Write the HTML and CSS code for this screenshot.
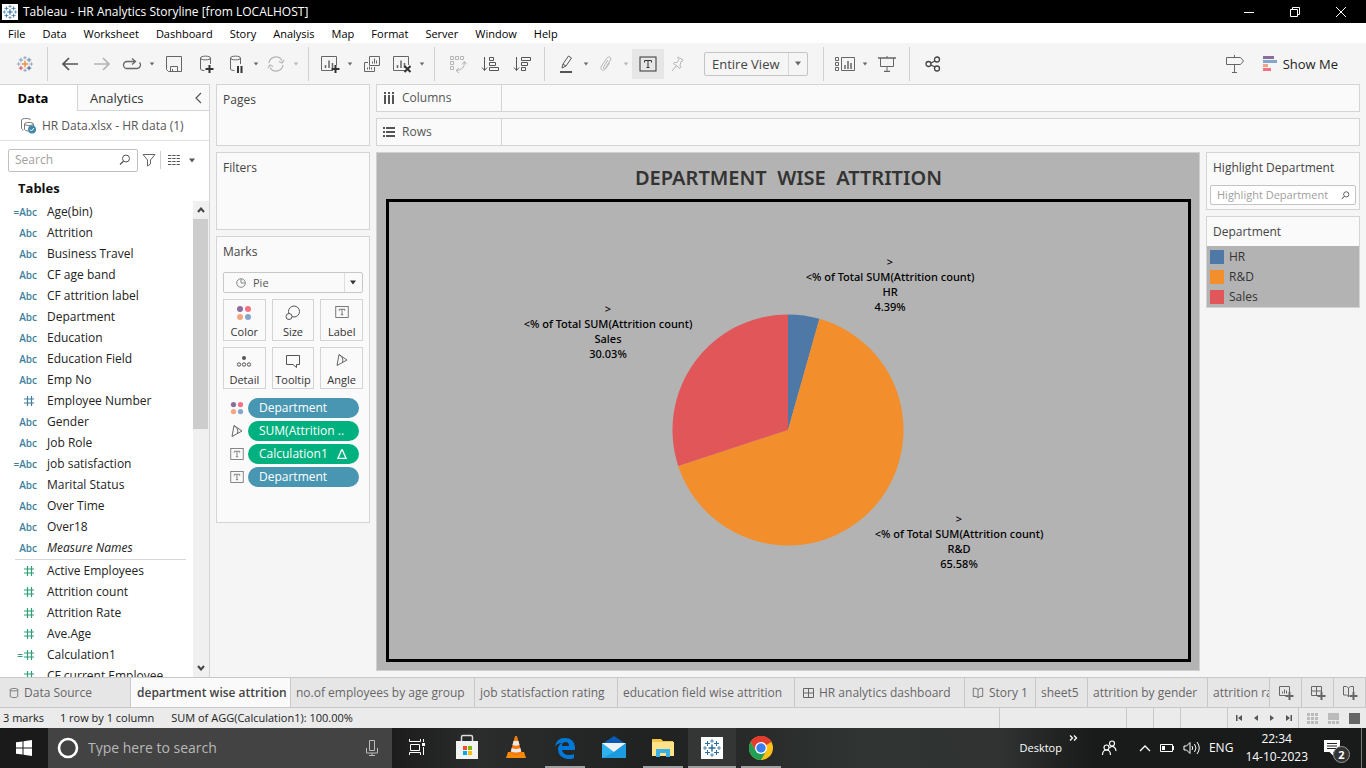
FILE: index.html
```html
<!DOCTYPE html>
<html lang="en">
<head>
<meta charset="utf-8">
<title>Tableau - HR Analytics Storyline</title>
<link rel="stylesheet" href="styles.css">
</head>
<body>
<svg class="defs" aria-hidden="true">
  <symbol id="caret" viewBox="0 0 8 5"><path d="M1 .5h6L4 4.5z" fill="currentColor"/></symbol>
  <symbol id="sheet" viewBox="0 0 20 18"><path d="M13 15.500H1.500V1.500h15V10" fill="none" stroke="currentColor"/><path d="M5.500 13v-3M9 13V5.500M12.500 13V8" stroke="currentColor" stroke-width="1.500"/></symbol>
  <symbol id="tbox" viewBox="0 0 18 16"><rect x="1" y="1" width="16" height="14" fill="none" stroke="currentColor"/><path d="M5.500 6.500v-2h7v2M9 4.500v7M7.500 11.500h3" fill="none" stroke="currentColor"/></symbol>
  <symbol id="dots" viewBox="0 0 16 16"><circle cx="4" cy="4" r="3" fill="#8a6e9e"/><circle cx="12" cy="4" r="3" fill="#fa7083"/><circle cx="4" cy="12" r="3" fill="#f3a67f"/><circle cx="12" cy="12" r="3" fill="#84a6cd"/></symbol>
  <symbol id="angle" viewBox="0 0 14 14"><path d="M4 1.500L12 7L2 12.500zM4 1.500Q9 4.500 7.500 9.500" fill="none" stroke="#666"/></symbol>
  <symbol id="lens" viewBox="0 0 12 12"><circle cx="7" cy="4.500" r="3.500" fill="none" stroke="currentColor"/><path d="M4.500 7.200L1 10.500" stroke="currentColor" stroke-width="1.300"/></symbol>
  <symbol id="hash" viewBox="0 0 12 12"><path d="M4.500 1v10M8.500 1v10M1 4h10M1 8h10" stroke="currentColor" stroke-width="1.200"/></symbol>
  <symbol id="book" viewBox="0 0 14 14"><path d="M7 3L4.500 1.500h-3v9.500h3L7 12.500L9.500 11h3V1.500h-3zM7 3v9" fill="none" stroke="currentColor"/></symbol>
  <symbol id="cross" viewBox="0 0 20 20"><g stroke="currentColor" fill="none"><path d="M10 6.500v7M6.500 10h7" stroke-width="1.500" stroke="var(--c0,currentColor)"/><path d="M5.500 3v5M3 5.500h5" stroke="var(--c1,currentColor)"/><path d="M14.500 3v5M12 5.500h5" stroke="var(--c2,currentColor)"/><path d="M5.500 12v5M3 14.500h5" stroke="var(--c3,currentColor)"/><path d="M14.500 12v5M12 14.500h5" stroke="var(--c4,currentColor)"/><path d="M10 1v4M8 3h4M10 15v4M8 17h4M3 8v4M1 10h4M17 8v4M15 10h4" stroke="var(--c5,currentColor)" stroke-width=".8"/></g></symbol>
  <symbol id="db" viewBox="0 0 12 14"><path d="M1.500 3v8c0 2 9 2 9 0V3M1.500 3c0-2 9-2 9 0s-9 2-9 0z" fill="none" stroke="currentColor"/></symbol>
</svg>

<div class="app">
<header class="titlebar">
  <svg class="applogo" width="16" height="16" viewBox="0 0 20 20"><use href="#cross"/></svg>
  <span class="title">Tableau - HR Analytics Storyline [from LOCALHOST]</span>
  <button aria-label="Minimize"><svg width="12" height="12"><path d="M1 6.500h10" stroke="#fff"/></svg></button>
  <button aria-label="Restore"><svg width="12" height="12" fill="none" stroke="#fff"><path d="M1.500 3.500h7v7h-7zM3.500 3V1.500h7v7H9"/></svg></button>
  <button aria-label="Close"><svg width="12" height="12" stroke="#fff"><path d="M1 1l10 10M11 1L1 11"/></svg></button>
</header>
<nav class="menubar">
  <button>File</button><button>Data</button><button>Worksheet</button><button>Dashboard</button><button>Story</button><button>Analysis</button><button>Map</button><button>Format</button><button>Server</button><button>Window</button><button>Help</button>
</nav>
<div class="toolbar">
  <button class="tb start" aria-label="Start page"><svg class="colorlogo" width="18" height="18"><use href="#cross"/></svg></button>
  <i class="sep"></i>
  <button class="tb" aria-label="Back"><svg width="18" height="14"><path d="M8 1L2 7l6 6M2 7h15" fill="none" stroke="#555" stroke-width="1.700"/></svg></button>
  <button class="tb" aria-label="Forward"><svg width="18" height="14"><path d="M10 1l6 6l-6 6M16 7H1" fill="none" stroke="#b4b4b4" stroke-width="1.700"/></svg></button>
  <button class="tb slim" aria-label="Redo"><svg width="20" height="12"><path d="M13 3.500H5a3.500 3.500 0 0 0 0 7h10a3.500 3.500 0 0 0 2.500-6M10 .5l3.500 3L10 6.500" fill="none" stroke="#666" stroke-width="1.300"/></svg></button>
  <button class="dd" aria-label="Redo options"><svg width="6" height="4"><use href="#caret"/></svg></button>
  <button class="tb" aria-label="Save"><svg width="18" height="18" fill="none" stroke="#666"><path d="M1.500 1.500h15v15h-13l-2-2zM5.500 16v-4.500h7V16M7.500 14v2"/></svg></button>
  <button class="tb" aria-label="New data source"><svg width="18" height="18" viewBox="0 0 18 18" fill="none" stroke="#666"><path d="M3.500 3v11c0 1 2 1.500 4 1.500M3.500 3c0-2.500 10-2.500 10 0s-10 2.500-10 0zM13.500 3v6"/><path d="M12.500 10v8M8.500 14h8" stroke="#333" stroke-width="2"/></svg></button>
  <button class="tb slim" aria-label="Pause updates"><svg width="18" height="18" viewBox="0 0 18 18" fill="none" stroke="#666"><path d="M3.500 3v11c0 1 2 1.500 4 1.500M3.500 3c0-2.500 10-2.500 10 0s-10 2.500-10 0zM13.500 3v6"/><path d="M11 11v7M14.500 11v7" stroke="#333" stroke-width="2"/></svg></button>
  <button class="dd" aria-label="Pause options"><svg width="6" height="4"><use href="#caret"/></svg></button>
  <button class="tb slim" aria-label="Refresh"><svg width="18" height="18" fill="none" stroke="#b4b4b4" stroke-width="1.300"><path d="M2 8a7 7 0 0 1 13-2.500M16 10a7 7 0 0 1-13 2.500M17 5l-2 3-3-1.500M1 13l2-3 3 1.500"/></svg></button>
  <button class="dd off" aria-label="Refresh options"><svg width="6" height="4"><use href="#caret"/></svg></button>
  <i class="sep"></i>
  <button class="tb slim" aria-label="New worksheet"><svg width="20" height="18"><use href="#sheet"/><path d="M15.500 10v8M11.500 14h8" stroke="#333" stroke-width="2"/></svg></button>
  <button class="dd" aria-label="New worksheet options"><svg width="6" height="4"><use href="#caret"/></svg></button>
  <button class="tb" aria-label="Duplicate"><svg width="18" height="18" fill="none" stroke="#666"><path d="M6.500 1.500h10v9h-10zM9.500 8.500v-2M11.500 8.500v-5M13.500 8.500v-3M5 7.500H1.500v9h10V12M4.500 14.500v-2M6.500 14.500v-3M8.500 14.500v-2"/></svg></button>
  <button class="tb slim" aria-label="Clear sheet"><svg width="20" height="18"><use href="#sheet"/><path d="M12.500 11l6 6M18.500 11l-6 6" stroke="#333" stroke-width="2"/></svg></button>
  <button class="dd" aria-label="Clear options"><svg width="6" height="4"><use href="#caret"/></svg></button>
  <i class="sep"></i>
  <button class="tb" aria-label="Swap"><svg width="18" height="18" fill="none" stroke="#b4b4b4"><path d="M1.500 1.500h3v3h-3zM6.500 1.500h3v3h-3zM11.500 1.500h3v3h-3zM1.500 6.500h3v3h-3zM1.500 11.500h3v3h-3zM15.500 7q0 8-8 8.500M13 9.500l2.500-3 2.500 3M10 13l-3 2.500 3 2.500"/></svg></button>
  <button class="tb" aria-label="Sort ascending"><svg width="18" height="16" fill="none" stroke="#555"><path d="M3.500 1v13M1 11.500l2.500 3 2.500-3M8.500 1.500h4v3h-4zM8.500 6.500h6v3h-6zM8.500 11.500h9v3h-9z"/></svg></button>
  <button class="tb" aria-label="Sort descending"><svg width="18" height="16" fill="none" stroke="#555"><path d="M3.500 1v13M1 11.500l2.500 3 2.500-3M8.500 1.500h9v3h-9zM8.500 6.500h6v3h-6zM8.500 11.500h4v3h-4z"/></svg></button>
  <i class="sep"></i>
  <button class="tb slim" aria-label="Highlight"><svg width="14" height="18" fill="none" stroke="#555"><path d="M3 13l1-4 5.500-8 3 2L7 11zM4 9l3 2"/><path d="M1 17h12" stroke-width="2"/></svg></button>
  <button class="dd" aria-label="Highlight options"><svg width="6" height="4"><use href="#caret"/></svg></button>
  <button class="tb slim" aria-label="Group"><svg width="14" height="16" fill="none" stroke="#b4b4b4"><path d="M9 4L4.500 11c-.8 1.500 1 2.500 2 1l5-8c1.500-3-2-4-3.500-2L2.500 10c-2 3.500 1.500 6 4 3l4-6"/></svg></button>
  <button class="dd off" aria-label="Group options"><svg width="6" height="4"><use href="#caret"/></svg></button>
  <button class="tb on" aria-label="Show mark labels"><svg width="18" height="16"><use href="#tbox"/></svg></button>
  <button class="tb slim" aria-label="Fix axes"><svg width="14" height="16" fill="none" stroke="#b4b4b4"><path d="M7 1l5 3-1 1.500-1 0-1 4 1 2-1 1-6.500-5 1-1H6l2-3-1-1zM5 10l-4 5"/></svg></button>
  <div class="fit"><select aria-label="Fit"><option>Entire View</option></select><svg width="8" height="5"><use href="#caret"/></svg></div>
  <i class="sep"></i>
  <button class="tb slim" aria-label="Show/hide cards"><svg width="22" height="16" fill="none" stroke="#666"><path d="M1.500 1.500h3v3h-3zM1.500 6.500h3v3h-3zM1.500 11.500h3v3h-3zM7.500 1.500h13v13h-13z"/><path d="M11 13V9M14 13V5M17 13V7" stroke-width="1.500"/></svg></button>
  <button class="dd" aria-label="Card options"><svg width="6" height="4"><use href="#caret"/></svg></button>
  <button class="tb" aria-label="Presentation mode"><svg width="18" height="16" fill="none" stroke="#666"><path d="M0 2h18M6 15.500h6" stroke-width="1.500"/><path d="M2.500 2v8.500h13V2M9 0v2M9 11v4"/></svg></button>
  <i class="sep"></i>
  <button class="tb" aria-label="Share"><svg width="16" height="16" fill="none" stroke="#444" stroke-width="1.300"><circle cx="3.500" cy="8" r="2.500"/><circle cx="12" cy="3.500" r="2.500"/><circle cx="12" cy="12.500" r="2.500"/><path d="M6 7l4-2M6 9l4 2"/></svg></button>
  <button class="tb guide" aria-label="Data guide"><svg width="20" height="18" fill="none" stroke="#666"><path d="M1.500 2.500h14l3 3.500-3 3.500h-14zM9.500 0v2.500M9.500 9.500v8M7 17.500h5"/></svg></button>
  <button class="showme"><svg width="14" height="15"><path d="M0 0h11v3H0z" fill="#8a6e9e"/><path d="M0 4h14v3H0z" fill="#84a6cd"/><path d="M0 8h5v3H0z" fill="#f3a67f"/><path d="M0 12h8v3H0z" fill="#fa7083"/></svg>Show Me</button>
</div>

<main class="work">
  <aside class="data">
    <div class="panetabs"><button class="cur">Data</button><button class="ana">Analytics<svg width="7" height="12"><path d="M6 1L1 6l5 5" fill="none" stroke="#555" stroke-width="1.200"/></svg></button></div>
    <div class="source"><svg width="17" height="17" fill="none" stroke="#777"><path d="M1.500 3v8c0 1 1 1.800 2 2M1.500 3c0-2 9-2 9 0M4.500 7c0-2 9-2 9 0s-9 2-9 0v5c0 1 2 2 3.500 2M13.500 7v2"/><circle cx="12" cy="12.500" r="4" fill="#3d87a8" stroke="none"/><path d="M10 12.500l1.500 1.500 2.500-3" stroke="#fff"/></svg>HR Data.xlsx - HR data (1)</div>
    <div class="find">
      <label class="search"><input type="text" placeholder="Search" aria-label="Search"><svg width="12" height="12"><use href="#lens"/></svg></label>
      <button aria-label="Filter"><svg width="14" height="14" fill="none" stroke="#666"><path d="M1 1.500h12L8.500 7v4l-3 2V7z"/></svg></button>
      <i></i>
      <button aria-label="View"><svg width="12" height="10" stroke="#555"><path d="M0 .5h12M0 3.500h12M0 6.500h12M0 9.500h12" stroke-dasharray="3.300 1"/></svg></button>
      <button aria-label="Menu"><svg width="8" height="5"><use href="#caret"/></svg></button>
    </div>
    <h2>Tables</h2>
    <div class="scroller">
      <ul class="fields">
        <li><b>=Abc</b>Age(bin)</li><li><b>Abc</b>Attrition</li><li><b>Abc</b>Business Travel</li><li><b>Abc</b>CF age band</li><li><b>Abc</b>CF attrition label</li><li><b>Abc</b>Department</li><li><b>Abc</b>Education</li><li><b>Abc</b>Education Field</li><li><b>Abc</b>Emp No</li><li><b><svg width="12" height="12"><use href="#hash"/></svg></b>Employee Number</li><li><b>Abc</b>Gender</li><li><b>Abc</b>Job Role</li><li><b>=Abc</b>job satisfaction</li><li><b>Abc</b>Marital Status</li><li><b>Abc</b>Over Time</li><li><b>Abc</b>Over18</li><li class="names"><b>Abc</b><em>Measure Names</em></li>
        <li class="m"><b><svg width="12" height="12"><use href="#hash"/></svg></b>Active Employees</li><li class="m"><b><svg width="12" height="12"><use href="#hash"/></svg></b>Attrition count</li><li class="m"><b><svg width="12" height="12"><use href="#hash"/></svg></b>Attrition Rate</li><li class="m"><b><svg width="12" height="12"><use href="#hash"/></svg></b>Ave.Age</li><li class="m"><b>=<svg width="12" height="12"><use href="#hash"/></svg></b>Calculation1</li><li class="m"><b><svg width="12" height="12"><use href="#hash"/></svg></b>CF current Employee</li>
      </ul>
      <div class="bar"><button aria-label="Scroll up"><svg width="8" height="6"><path d="M1 5l3-3.500L7 5" fill="none" stroke="#444" stroke-width="2"/></svg></button><i></i><button aria-label="Scroll down"><svg width="8" height="6"><path d="M1 1l3 3.500L7 1" fill="none" stroke="#444" stroke-width="2"/></svg></button></div>
    </div>
  </aside>

  <section class="cards">
    <div class="card pages"><h3>Pages</h3></div>
    <div class="card filters"><h3>Filters</h3></div>
    <div class="card marks"><h3>Marks</h3>
      <div class="marktype"><svg class="pieicon" width="10" height="10" fill="none" stroke="#888"><circle cx="5" cy="5" r="4.300"/><path d="M5 1v4h4"/></svg><select aria-label="Mark type"><option>Pie</option></select><svg class="arrow" width="8" height="5"><use href="#caret"/></svg></div>
      <div class="grid">
        <button><svg width="16" height="16"><use href="#dots"/></svg>Color</button>
        <button><svg width="16" height="16" fill="none" stroke="#555"><circle cx="9" cy="6.500" r="5.500"/><circle cx="4" cy="11.500" r="3" fill="#fafafa"/></svg>Size</button>
        <button><svg width="14" height="14" viewBox="0 0 18 16" color="#555"><use href="#tbox"/></svg>Label</button>
        <button><svg width="16" height="16" fill="none" stroke="#555"><circle cx="8" cy="5" r="2" fill="#555" stroke="none"/><circle cx="3" cy="11.500" r="1.700"/><circle cx="8" cy="11.500" r="1.700"/><circle cx="13" cy="11.500" r="1.700"/></svg>Detail</button>
        <button><svg width="16" height="16" fill="none" stroke="#555"><path d="M1.500 2.500h13v9h-3v3l-3.500-3H1.500z"/></svg>Tooltip</button>
        <button><svg width="14" height="14"><use href="#angle"/></svg>Angle</button>
      </div>
      <ul class="pills">
        <li><svg width="14" height="14"><use href="#dots"/></svg><button class="blue">Department</button></li>
        <li><svg width="14" height="14"><use href="#angle"/></svg><button>SUM(Attrition ..</button></li>
        <li><svg width="14" height="14"><use href="#tbox"/></svg><button>Calculation1<svg width="10" height="10"><path d="M1 9.300L4.600 1h.8L9 9.300z" fill="none" stroke="#fff" stroke-width="1.300"/></svg></button></li>
        <li><svg width="14" height="14"><use href="#tbox"/></svg><button class="blue">Department</button></li>
      </ul>
    </div>
  </section>

  <section class="canvas">
    <div class="shelf"><div><svg width="12" height="12" stroke="#555" stroke-width="2"><path d="M2 0v2M6 0v2M10 0v2M2 3v9M6 3v9M10 3v9"/></svg>Columns</div></div>
    <div class="shelf"><div><svg width="12" height="12" stroke="#555" stroke-width="2"><path d="M0 2h2M0 6h2M0 10h2M3 2h9M3 6h9M3 10h9"/></svg>Rows</div></div>
    <div class="lower">
      <div class="viz">
        <h1>DEPARTMENT  WISE  ATTRITION</h1>
        <div class="frame">
          <svg viewBox="0 0 799 457" role="img" aria-label="Attrition by department">
            <g transform="translate(399 228)">
              <path d="M0 0V-115.500A115.500 115.500 0 0 1 31.440-111.140Z" fill="#4e79a7"/>
              <path d="M0 0L31.440-111.140A115.500 115.500 0 1 1-109.780 35.900Z" fill="#f28e2b"/>
              <path d="M0 0L-109.780 35.900A115.500 115.500 0 0 1 0-115.500Z" fill="#e15759"/>
            </g>
            <g class="lbl">
              <text x="501" y="64">&gt;</text><text x="501" y="79">&lt;% of Total SUM(Attrition count)</text><text x="501" y="94">HR</text><text x="501" y="109">4.39%</text>
              <text x="219" y="111">&gt;</text><text x="219" y="126">&lt;% of Total SUM(Attrition count)</text><text x="219" y="141">Sales</text><text x="219" y="156">30.03%</text>
              <text x="570" y="321">&gt;</text><text x="570" y="336">&lt;% of Total SUM(Attrition count)</text><text x="570" y="351">R&amp;D</text><text x="570" y="366">65.58%</text>
            </g>
          </svg>
        </div>
      </div>
      <div class="side">
        <div class="card hl"><h3>Highlight Department</h3><label><input type="text" placeholder="Highlight Department" aria-label="Highlight Department"><svg width="9" height="9" viewBox="0 0 12 12"><use href="#lens"/></svg></label></div>
        <div class="card legend"><h3>Department</h3>
          <ul><li><i class="hr"></i>HR</li><li><i class="rd"></i>R&amp;D</li><li><i class="sales"></i>Sales</li></ul></div>
      </div>
    </div>
  </section>
</main>

<nav class="tabs">
  <button class="w1"><svg width="10" height="12" viewBox="0 0 12 14"><use href="#db"/></svg>Data Source</button>
  <button class="w2 cur">department wise attrition</button>
  <button class="w3">no.of employees by age group</button>
  <button class="w4">job statisfaction rating</button>
  <button class="w5">education field wise attrition</button>
  <button class="w6"><svg width="12" height="12" fill="none" stroke="#666"><path d="M1.500 1.500h10v9h-10zM6.500 1.500v9M1.500 6h10"/></svg>HR analytics dashboard</button>
  <button class="w7"><svg width="12" height="12"><use href="#book"/></svg>Story 1</button>
  <button class="w8">sheet5</button>
  <button class="w9">attrition by gender</button>
  <button class="last">attrition ra</button>
  <button class="new" aria-label="New Worksheet"><svg width="16" height="16" fill="none" stroke="#666"><path d="M8 10.500H1.500v-9h10V8M4.500 8.500v-2M6.500 8.500v-4M8.500 8.500v-3"/><path d="M11.500 7v8M7.500 11h8" stroke-width="2"/></svg></button>
  <button class="new" aria-label="New Dashboard"><svg width="16" height="16" fill="none" stroke="#666"><path d="M8 10.500H1.500v-9h10V8M6.500 1.500v9M1.500 6h10"/><path d="M11.500 7v8M7.500 11h8" stroke-width="2"/></svg></button>
  <button class="new" aria-label="New Story"><svg width="16" height="16" fill="none" stroke="#666"><path d="M6.500 3L4.500 1.500h-3V10h3l2 1.500M6.500 3v9M6.500 3l2-1.500h3V7"/><path d="M11.500 7v8M7.500 11h8" stroke-width="2"/></svg></button>
</nav>
<footer class="status">
  <span>3 marks</span><span>1 row by 1 column</span><span>SUM of AGG(Calculation1): 100.00%</span>
  <i class="s1"></i><i class="s2"></i><i class="s2"></i><i class="s3"></i>
  <div class="pager"><button aria-label="First"><svg width="8" height="8" fill="#555"><path d="M0 1h1.500v6H0zM6 1v6L2 4z"/></svg></button><button aria-label="Previous"><svg width="8" height="8" fill="#555"><path d="M6 1v6L2 4z"/></svg></button><button aria-label="Next"><svg width="8" height="8" fill="#555"><path d="M2 1v6l4-3z"/></svg></button><button aria-label="Last"><svg width="8" height="8" fill="#555"><path d="M2 1v6l4-3zM6.500 1H8v6H6.500z"/></svg></button></div>
  <div class="views"><button aria-label="Sheet sorter"><svg width="11" height="11" stroke="#bbb" stroke-width="3"><path d="M0 1.500h11M0 5.500h11M0 9.500h11" stroke-dasharray="3 1"/></svg></button><button aria-label="Filmstrip"><svg width="11" height="11" fill="#bbb"><path d="M0 0h11v7H0zM0 8h3v3H0zM4 8h3v3H4zM8 8h3v3H8z"/></svg></button><button aria-label="Tabs"><svg width="11" height="11"><path d="M0 0h11v11H0z" fill="#666"/></svg></button></div>
</footer>

<div class="taskbar">
  <button class="win" aria-label="Start"><svg width="16" height="16" fill="#fff"><path d="M0 2.300L6.500 1.400v6.100H0zM7.500 1.300L16 0v7.500H7.500zM0 8.500h6.500v6.100L0 13.700zM7.500 8.500H16V16l-8.500-1.300z"/></svg></button>
  <label class="wsearch"><svg width="22" height="22"><circle cx="11" cy="11" r="9" fill="none" stroke="#fff" stroke-width="2.600"/></svg><input type="text" placeholder="Type here to search" aria-label="Type here to search"><svg width="12" height="18" fill="none" stroke="#bbb"><path d="M3.500 1.500h5v10h-5zM.5 9v5h11V9M6 14v3M3 16.500h6"/></svg></label>
  <button class="tk view" aria-label="Task View"><svg width="18" height="16" fill="none" stroke="#fff"><path d="M2.500 5.500h9v6h-9zM1.500 0v2.500h11V0M1.500 16v-2.500h11V16M15.500 0v3M15.500 8v8"/><path d="M14 4h3v3h-3z" fill="#fff" stroke="none"/></svg></button>
  <button class="tk" aria-label="Microsoft Store"><svg width="24" height="26"><path d="M6.500 8V3q0-1.500 1.500-1.500h8q1.500 0 1.500 1.500v5" fill="none" stroke="#ddd" stroke-width="1.500"/><path d="M1 7h22v18H1z" fill="#f2f2f2"/><path d="M8 12h4v4H8z" fill="#f25022"/><path d="M13 12h4v4h-4z" fill="#7fba00"/><path d="M8 17h4v4H8z" fill="#00a4ef"/><path d="M13 17h4v4h-4z" fill="#ffb900"/></svg></button>
  <button class="tk" aria-label="VLC"><svg width="22" height="24"><path d="M3 17h16l2 6H1z" fill="#f58a07"/><path d="M10 1h2l5 18q-6 3-12 0z" fill="#f27b0c"/><path d="M8.500 6h5l1 4q-3.500 1.500-7 0zM6.800 13q4 2 8.500 0l1 3.500q-5 2-10.500 0z" fill="#e9e9e9"/></svg></button>
  <button class="tk run" aria-label="Edge"><svg width="22" height="22"><path d="M1 10Q2 1 11 1q9 0 10 9v3H8q1 5 7 5 3 0 5-1v4q-3 1.500-7 1Q4 20 4 12q0-4 4-6-5 0-7 4M8 9h7q0-4-3.500-4T8 9" fill="#0078d7" fill-rule="evenodd"/></svg></button>
  <button class="tk" aria-label="Mail"><svg width="26" height="24"><path d="M1 9L13 1l12 8z" fill="#0a5bb5"/><path d="M1 8h24v15H1z" fill="#2fb1ee"/><path d="M1 8h24l-12 9z" fill="#f2f2f2"/><path d="M1 23l12-6L25 8v15z" fill="#1c9be0"/></svg></button>
  <button class="tk run" aria-label="File Explorer"><svg width="24" height="20"><path d="M1 1h9l2 2h10v6H1z" fill="#f3c544"/><path d="M1 4h22v14H1z" fill="#ffe18a"/><path d="M5 19v-8h14v8h-4v-4H9v4z" fill="#38b0e8"/></svg></button>
  <button class="tk run act" aria-label="Tableau"><svg width="22" height="22" viewBox="0 0 22 22"><path d="M0 0h22v22H0z" fill="#fff"/><use href="#cross" x="1" y="1" width="20" height="20"/></svg></button>
  <button class="tk run" aria-label="Chrome"><svg width="24" height="24"><circle cx="12" cy="12" r="12" fill="#fbc116"/><path d="M12 12L1.600 6A12 12 0 0 1 22.400 6z" fill="#e33b2e"/><path d="M12 6h10.400A12 12 0 0 0 1.600 6L6.800 15z" fill="#e33b2e"/><path d="M1.600 6A12 12 0 0 0 12 24l5.200-9H6.800z" fill="#1fa055"/><circle cx="12" cy="12" r="6" fill="#fff"/><circle cx="12" cy="12" r="4.700" fill="#3b7ded"/></svg></button>
  <div class="tray">
    <span class="desk">Desktop</span><button class="more" aria-label="More toolbars"><svg width="9" height="6" fill="none" stroke="#fff" stroke-width="1.300"><path d="M1 .5L3.500 3L1 5.500M5 .5L7.500 3L5 5.500"/></svg></button>
    <button class="people" aria-label="People"><svg width="16" height="16" fill="none" stroke="#fff" stroke-width="1.200"><circle cx="5.500" cy="7.500" r="2.500"/><circle cx="11" cy="3.500" r="2.500"/><path d="M1.500 15q0-5 4-5t4 5M8.500 8q2-2.500 4.500-1 2 1.500 2 4"/></svg></button>
    <button aria-label="Hidden icons"><svg width="12" height="8"><path d="M1 7l5-5 5 5" fill="none" stroke="#fff" stroke-width="1.300"/></svg></button>
    <button aria-label="Battery"><svg width="16" height="10" fill="none" stroke="#fff"><path d="M1.500 1.500h12v7h-12zM14.500 3v4"/><path d="M3 3h3v4H3z" fill="#fff" stroke="none"/></svg></button>
    <button aria-label="Volume"><svg width="18" height="14" fill="none" stroke="#fff"><path d="M1 5h2.500L7 1.500v11L3.500 9H1zM9 5q1.500 2 0 4M11.500 3q3 4 0 8M14 1q4.500 6 0 12"/></svg></button>
    <span>ENG</span>
    <time>22:34<br>14-10-2023</time>
    <button class="note" aria-label="Notifications"><svg width="17" height="16"><path d="M0 0h16v12H9v3.500L5.500 12H0z" fill="#fff"/><path d="M3 3.500h10M3 6h10M3 8.500h10" stroke="#222"/></svg><span>2</span></button>
  </div>
</div>
</div>
</body>
</html>
```
FILE: styles.css
```css
* { box-sizing: border-box; }
body, h1, h2, h3, ul { margin: 0; padding: 0; }
body { font: 12px/16px "Open Sans", "Noto Sans", sans-serif; color: #333; background: #f5f5f5; }
ul { list-style: none; }
button, input, select { font: inherit; color: inherit; background: none; border: 0; padding: 0; margin: 0; outline: 0; }
button { display: flex; align-items: center; justify-content: center; white-space: nowrap; }
svg { display: block; flex: none; }
select { appearance: none; }
.defs { position: absolute; width: 0; height: 0; }
.app { display: flex; flex-direction: column; height: 100vh; overflow: hidden; }

.titlebar { display: flex; align-items: center; height: 23px; flex: none; background: #000; color: #fff; padding: 0 2px; }
.titlebar .title { flex: 1; padding-left: 5px; }
.titlebar button { width: 46px; height: 20px; }
.applogo { background: #fff; color: #2f6f9f; }
.menubar { display: flex; gap: 17px; height: 20px; flex: none; background: #fff; color: #000; padding: 1px 8px 0; font-size: 11px; }

.toolbar { display: flex; align-items: center; height: 41px; flex: none; padding: 0 23px 0 9px; color: #666; background: #f5f5f5; }
.tb { width: 32px; height: 30px; }
.tb.slim { width: 28px; }
.tb.on { background: #e6e6e6; color: #333; }
.dd { width: 12px; height: 30px; }
.dd.off { color: #b4b4b4; }
.sep { width: 1px; height: 34px; background: #d0d0d0; margin: 0 7px 0 6px; }
.start + .sep { margin-right: 6px; }
.colorlogo { --c0: #eb8c38; --c1: #6f9bb5; --c2: #4f7fa5; --c3: #c73f4a; --c4: #2c4d86; --c5: #8090a8; }
.fit { display: flex; align-items: center; width: 104px; height: 24px; margin: 0 9px 0 12px; border: 1px solid #c4c4c4; border-radius: 2px; padding-right: 5px; }
.fit select { flex: 1; height: 22px; padding-left: 7px; margin-right: 5px; border-right: 1px solid #d8d8d8; font-size: 13px; color: #444; }
.guide { margin-left: auto; margin-right: 12px; }
.showme { gap: 6px; font-size: 13px; color: #222; padding-right: 5px; }

.work { display: flex; gap: 6px; flex: 1; min-height: 0; padding-right: 6px; }
.data { display: flex; flex-direction: column; width: 210px; flex: none; background: #fff; border: solid #d4d4d4; border-width: 1px 1px 0 0; }
.panetabs { display: grid; grid-template-columns: 77px 1fr; height: 26px; }
.panetabs .cur { font-weight: 700; font-size: 13px; color: #000; padding-right: 11px; }
.panetabs .ana { justify-content: space-between; font-size: 13px; padding: 0 7px 0 12px; background: #fafafa; border: solid #d4d4d4; border-width: 0 0 1px 1px; }
.source { display: flex; align-items: center; gap: 5px; height: 30px; padding-left: 20px; border-bottom: 1px solid #e0e0e0; color: #555; }
.find { display: flex; align-items: center; height: 38px; padding-left: 8px; gap: 4px; color: #555; }
.search { display: flex; align-items: center; width: 130px; height: 23px; border: 1px solid #c0c0c0; border-radius: 2px; padding: 0 6px; }
.search input { flex: 1; min-width: 0; }
input::placeholder { color: #a0a0a0; opacity: 1; }
.find i { width: 1px; height: 18px; background: #d0d0d0; margin-right: 3px; }
.find button:last-child { margin-left: 4px; }
.data h2 { font-size: 13px; line-height: 18px; color: #111; padding-left: 18px; margin-bottom: 4px; }
.scroller { display: flex; flex: 1; min-height: 0; overflow: hidden; }
.fields { flex: 1; color: #222; }
.fields li { display: flex; align-items: center; height: 21px; white-space: nowrap; }
.fields b { display: flex; align-items: center; justify-content: flex-end; width: 37px; margin-right: 10px; font: 600 10px/12px "Open Sans", sans-serif; color: #3e7f9b; }
.fields b svg { margin-right: 2px; }
.fields .m b { color: #2f9e77; }
.fields .names { height: 23px; padding-bottom: 1px; margin: 0 7px 0 15px; border-bottom: 1px solid #d8d8d8; }
.fields .names b { width: 22px; }
.bar { display: flex; flex-direction: column; width: 16px; background: #f0f0f0; }
.bar button { height: 18px; }
.bar i { height: 210px; background: #cdcdcd; margin-right: 1px; }
.bar button:last-child { margin-top: auto; }

.cards { display: flex; flex-direction: column; gap: 6px; width: 154px; flex: none; }
.card { background: #fafafa; border: 1px solid #d4d4d4; }
h3 { font-weight: 400; font-size: 12px; line-height: 30px; padding-left: 6px; color: #444; }
.pages { height: 62px; }
.filters { height: 78px; }
.marks { height: 287px; }
.marktype { display: flex; align-items: center; height: 21px; margin: 5px 6px 6px; border: 1px solid #c8c8c8; border-radius: 2px; padding: 0 5px 0 12px; }
.marktype select { flex: 1; height: 19px; font-size: 11px; padding-left: 7px; margin-right: 4px; border-right: 1px solid #ddd; color: #555; }
.grid { display: grid; grid-template-columns: repeat(3, 1fr); gap: 6px; margin: 0 6px; }
.grid button { flex-direction: column; justify-content: space-between; height: 42px; border: 1px solid #d4d4d4; font-size: 11px; padding: 5px 0 0; color: #333; }
.pills { margin: 9px 10px 0 13px; display: grid; gap: 3px; }
.pills li { display: flex; align-items: center; gap: 4px; color: #666; }
.pills button { flex: 1; justify-content: flex-start; gap: 9px; height: 20px; border-radius: 10px; background: #00b180; color: #fff; padding-left: 11px; font-size: 12px; }
.pills .blue { background: #4996b2; }

.canvas { display: flex; flex-direction: column; gap: 6px; flex: 1; min-width: 0; }
.shelf { height: 28px; background: #fafafa; border: 1px solid #d4d4d4; }
.shelf div { display: flex; align-items: center; gap: 7px; width: 125px; height: 26px; padding-left: 6px; border-right: 1px solid #d4d4d4; color: #555; }
.lower { display: flex; gap: 6px; flex: 1; min-height: 0; }
.viz { display: flex; flex-direction: column; flex: 1; min-width: 0; background: #b3b3b3; border: 1px solid #d0d0d0; padding: 0 8px 8px 9px; margin-bottom: 6px; }
h1 { font: 600 20px/27px "Noto Sans", "Open Sans", sans-serif; color: #333; text-align: center; white-space: pre; padding: 11px 0 8px; }
.frame { flex: 1; min-height: 0; border: 3px solid #000; }
.frame svg { width: 100%; height: 100%; }
.lbl { font: 500 11px "Noto Sans", "Open Sans", sans-serif; text-anchor: middle; fill: #000; }
.side { display: flex; flex-direction: column; gap: 6px; width: 154px; flex: none; }
.hl { height: 58px; }
.hl label { display: flex; align-items: center; height: 20px; margin: 2px 3px 0; padding: 0 5px 0 6px; background: #fff; border: 1px solid #c4c4c4; border-radius: 2px; }
.hl input { flex: 1; min-width: 0; font-size: 11px; }
.legend h3 { line-height: 29px; }
.legend ul { background: #b3b3b3; padding: 1px 0 0 3px; }
.legend li { display: flex; align-items: center; gap: 5px; height: 20px; }
.legend i { width: 14px; height: 14px; }
.hr { background: #4e79a7; }
.rd { background: #f28e2b; }
.sales { background: #e15759; }

.tabs { display: flex; height: 31px; flex: none; background: #e6e6e6; border: solid #c8c8c8; border-width: 1px 0; color: #666; }
.tabs button { justify-content: flex-start; gap: 5px; padding-left: 5px; border-right: 1px solid #c8c8c8; overflow: hidden; flex: none; }
.tabs .cur { background: #fafafa; color: #444; font-weight: 600; padding-left: 6px; }
.tabs .w1 { width: 131px; padding-left: 9px; }
.w2 { width: 160px; }
.w3 { width: 184px; }
.w4 { width: 143px; }
.w5 { width: 177px; }
.tabs .w6 { width: 170px; padding-left: 7px; }
.tabs .w7 { width: 71px; padding-left: 7px; }
.w8 { width: 52px; }
.w9 { width: 120px; }
.tabs .last { flex: 1 1 0; min-width: 0; }
.tabs .new { width: 32px; justify-content: center; padding: 0; }
.status { display: flex; align-items: center; height: 20px; flex: none; background: #ebebeb; font-size: 11px; color: #222; padding-left: 3px; }
.status span { margin-right: 17px; }
.status span + span + span { margin-right: 0; }
.status span:first-child { margin-right: 16px; }
.status i { height: 20px; border-left: 1px solid #c8c8c8; }
.s1 { width: 127px; margin-left: auto; }
.s2 { width: 27px; }
.s3 { width: 47px; }
.pager { display: flex; gap: 8px; width: 71px; height: 20px; border-left: 1px solid #c8c8c8; padding-left: 8px; }
.views { display: flex; gap: 10px; width: 68px; height: 20px; border-left: 1px solid #c8c8c8; padding-left: 8px; }

.taskbar { display: flex; height: 40px; flex: none; color: #fff; background: linear-gradient(90deg, #1a1a1a 0 28%, #2a2d2b 35%, #202222 48%, #303432 63%, #303332 73%, #191a1a 80%); }
.win { width: 48px; }
.wsearch { display: flex; align-items: center; width: 344px; background: #434343; padding: 0 14px 0 9px; }
.wsearch input { flex: 1; min-width: 0; font-size: 14px; padding-left: 9px; }
.wsearch input::placeholder { color: #b8b8b8; }
.tk { width: 48px; margin-right: 1px; border-bottom: 2px solid transparent; }
.view { width: 50px; }
.run { background: linear-gradient(#a0a0a0, #a0a0a0) center bottom / 40px 2px no-repeat; border: 0; }
.act { background: linear-gradient(#a0a0a0, #a0a0a0) center bottom / 48px 2px no-repeat #343535; color: #2f6f9f; }
.tray { display: flex; align-items: center; margin-left: auto; padding-right: 4px; }
.desk { font-size: 11px; }
.more { width: 24px; height: 20px; align-self: flex-start; }
.tray button + button { margin-right: 8px; }
.tray .people { margin: 0 22px 0 15px; }
.tray time { text-align: center; line-height: 18px; margin: 0 16px 0 12px; }
.tray .note { position: relative; height: 40px; padding-right: 20px; margin: 0; border-right: 1px solid #777; }
.note span { position: absolute; right: 11px; top: 18px; width: 17px; height: 17px; border-radius: 50%; border: 1px solid #999; background: #333; font: 700 11px/15px "Open Sans", sans-serif; text-align: center; }
```
